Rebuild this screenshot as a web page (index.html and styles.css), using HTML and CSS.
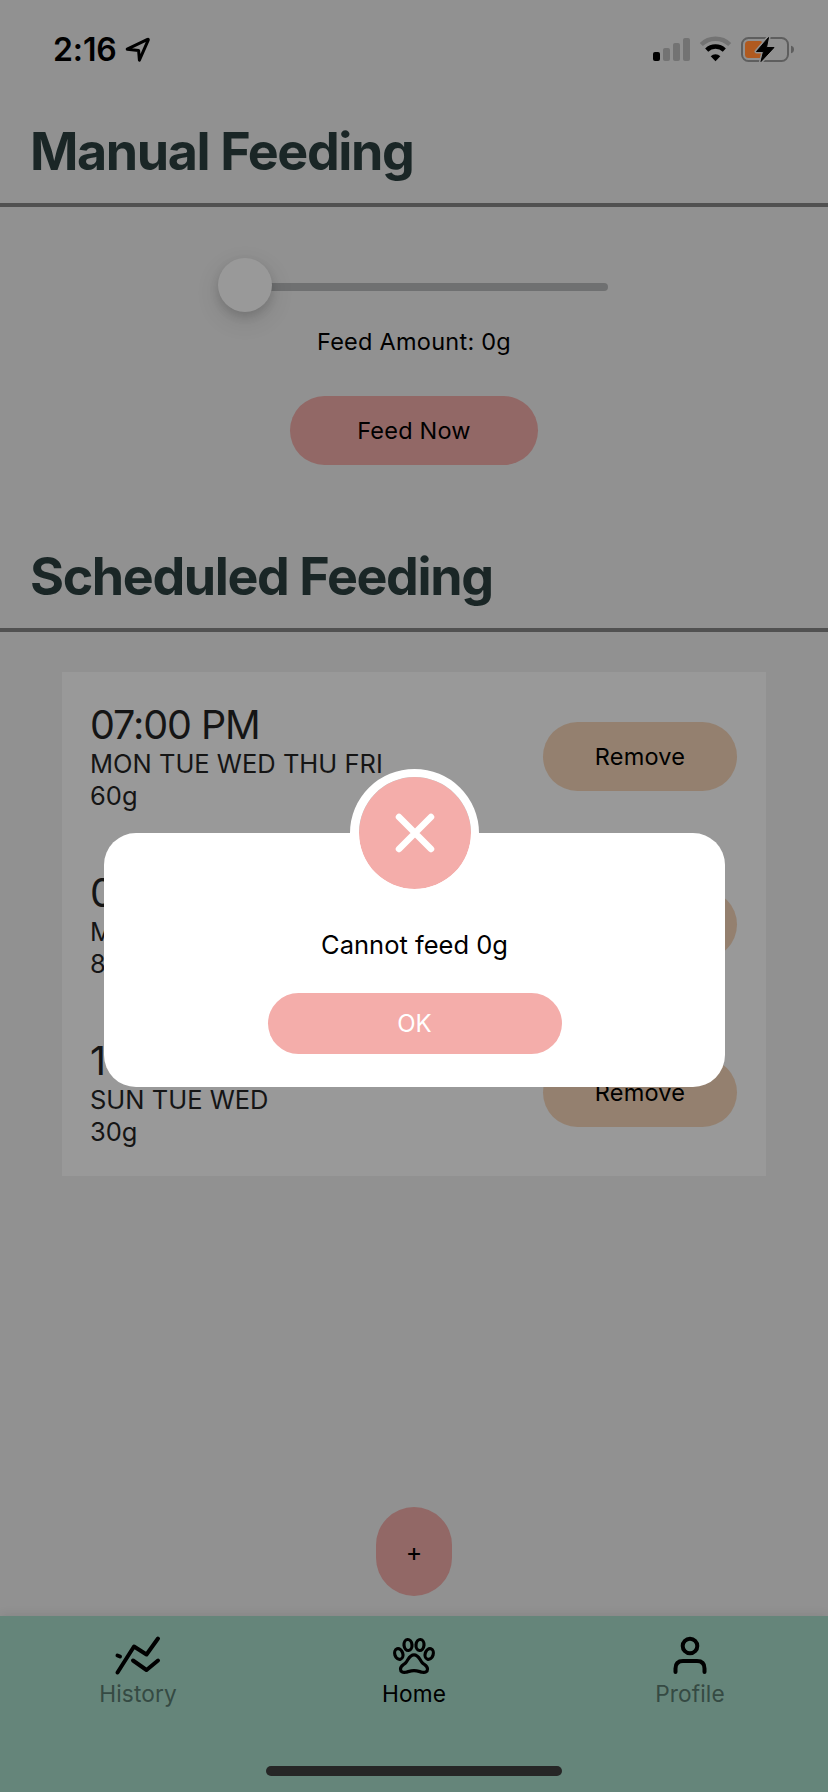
FILE: index.html
```html
<!DOCTYPE html>
<html lang="en">
<head>
<meta charset="utf-8">
<title>Feeder</title>
<link rel="stylesheet" href="styles.css">
</head>
<body>
<div class="screen">
  <header class="status">
    <div class="status-left">
      <span class="clock">2:16</span>
      <svg class="loc" width="26" height="26" viewBox="0 0 26 26"><path d="M2.2 12.2 L22.6 2.4 Q23.6 2 23.2 3.2 L14.4 23.2 L13.6 13.4 Z" fill="none" stroke="#000" stroke-width="3" stroke-linejoin="round"/></svg>
    </div>
    <svg class="status-icons" width="144" height="30" viewBox="0 0 144 30">
      <rect x="0" y="17" width="7" height="9" rx="2" fill="#000"/>
      <g fill="#737373"><rect x="10" y="13" width="7" height="13" rx="2"/><rect x="20" y="8" width="7" height="18" rx="2"/><rect x="30" y="3" width="7" height="23" rx="2"/></g>
      <path d="M48.3 9.5 A20.3 20.3 0 0 1 76.7 9.5" fill="none" stroke="#737373" stroke-width="4.4"/>
      <path d="M53.7 15.1 A12.6 12.6 0 0 1 71.3 15.1" fill="none" stroke="#000" stroke-width="4.4"/>
      <path d="M57.7 21.3 A6.8 6.8 0 0 1 67.3 21.3 L62.5 26.2 Z" fill="#000"/>
      <rect x="89" y="3" width="46" height="23" rx="6.5" fill="none" stroke="#5e5e5e" stroke-width="2"/>
      <path d="M138 10.8 Q141 11.5 141 14.5 Q141 17.500 138 18.200 Z" fill="#5e5e5e"/>
      <rect x="92" y="6" width="18" height="17" rx="3.500" fill="#b05a20"/>
      <path d="M115.500 2.500 L103.500 16.500 H110.500 L108 26.500 L121 12.500 H113.500 Z" fill="#000" stroke="#919191" stroke-width="4" stroke-linejoin="round"/>
      <path d="M115.500 2.500 L103.500 16.500 H110.500 L108 26.500 L121 12.500 H113.500 Z" fill="#000" stroke="#000" stroke-width="1" stroke-linejoin="round"/>
    </svg>
  </header>

  <h1 class="title">Manual Feeding</h1>
  <section class="manual">
    <div class="slider"><div class="knob"></div><div class="track"></div></div>
    <p class="amount">Feed Amount: 0g</p>
    <button class="btn feed">Feed Now</button>
  </section>

  <h1 class="title scheduled">Scheduled Feeding</h1>
  <section class="list">
    <div class="item">
      <div class="info"><div class="time">07:00 PM</div><div class="days">MON TUE WED THU FRI</div><div class="grams">60g</div></div>
      <button class="btn remove">Remove</button>
    </div>
    <div class="item">
      <div class="info"><div class="time">0</div><div class="days">M</div><div class="grams">8</div></div>
      <button class="btn remove"></button>
    </div>
    <div class="item">
      <div class="info"><div class="time">1</div><div class="days">SUN TUE WED</div><div class="grams">30g</div></div>
      <button class="btn remove">Remove</button>
    </div>
  </section>

  <button class="add">+</button>

  <nav class="tabs">
    <div class="tab history">
      <svg width="48" height="42" viewBox="0 0 48 42" fill="none" stroke="#000" stroke-width="4" stroke-linecap="round" stroke-linejoin="round"><path d="M3.500 37.500 L20 11.500 L32.500 19.500 L44 3.500"/><path d="M19 25.500 L32.500 35 L44 25.500"/><path d="M3.500 20.500 L6 21.500"/></svg>
      <span>History</span>
    </div>
    <div class="tab active home">
      <svg width="48" height="42" viewBox="0 0 48 42" fill="none" stroke="#000" stroke-width="3.200"><ellipse cx="18" cy="10" rx="4" ry="5.500" transform="rotate(-6 18 10)"/><ellipse cx="30" cy="10" rx="4" ry="5.500" transform="rotate(6 30 10)"/><ellipse cx="8.800" cy="19" rx="4" ry="5.500" transform="rotate(-18 8.800 19)"/><ellipse cx="39.200" cy="19" rx="4" ry="5.500" transform="rotate(18 39.200 19)"/><path d="M24 19.800 C19 19.800 18.500 25 15.500 28 C12.500 30.500 10.500 31 10.500 34 C10.500 37 13 37.800 15.500 37.300 C18.500 36.700 20.500 35.700 24 35.700 C27.500 35.700 29.500 36.700 32.500 37.300 C35 37.800 37.500 37 37.500 34 C37.500 31 35.500 30.500 32.500 28 C29.500 25 29 19.800 24 19.800 Z"/></svg>
      <span>Home</span>
    </div>
    <div class="tab profile">
      <svg width="48" height="42" viewBox="0 0 48 42" fill="none" stroke="#000" stroke-width="4" stroke-linecap="round"><circle cx="24" cy="11" r="7.300"/><path d="M9.500 37 V33.500 Q9.500 26 17 26 H31 Q38.500 26 38.500 33.500 V37"/></svg>
      <span>Profile</span>
    </div>
  </nav>
  <div class="indicator"></div>

  <div class="dialog">
    <div class="badge"><svg width="40" height="40" viewBox="0 0 40 40"><path d="M4 4 L36 36 M36 4 L4 36" stroke="#fff" stroke-width="6.500" stroke-linecap="round"/></svg></div>
    <p class="message">Cannot feed 0g</p>
    <button class="ok">OK</button>
  </div>
</div>
</body>
</html>
```

FILE: styles.css
```css
* { box-sizing: border-box; }
body { margin: 0; font-family: Inter, "Liberation Sans", sans-serif; color: #000; }
p, h1 { margin: 0; }
button { border: 0; padding: 0; font: inherit; color: inherit; white-space: nowrap; }
.screen { position: relative; width: 828px; height: 1792px; background: #919191; overflow: hidden; display: flex; flex-direction: column; white-space: nowrap; }
.status { height: 100px; flex: none; padding: 0 31px 0 53px; display: flex; justify-content: space-between; align-items: flex-start; }
.status-left { display: flex; align-items: flex-start; gap: 8px; padding-top: 30px; }
.clock { font-size: 32px; line-height: 40px; font-weight: 600; width: 64px; letter-spacing: -0.1px; }
.loc { margin-top: 7px; }
.status-icons { margin-top: 35px; }
.title { flex: none; height: 107px; padding: 20px 30px 0; border-bottom: 4px solid #515151; font-size: 52px; line-height: 64px; font-weight: 700; color: #1a2626; letter-spacing: -1.4px; }
.manual { height: 318px; flex: none; padding-top: 51px; display: flex; flex-direction: column; align-items: center; }
.slider { width: 390px; height: 54px; margin-right: 2px; display: flex; align-items: center; }
.knob { width: 54px; height: 54px; border-radius: 50%; background: #999; box-shadow: 0 8px 24px rgba(0,0,0,.12), 0 4px 10px rgba(0,0,0,.12); z-index: 1; }
.track { flex: 1; height: 8px; margin: 4px 0 0 -6px; border-radius: 4px; background: #6f7071; }
.amount { margin-top: 16px; font-size: 23.5px; line-height: 28px; letter-spacing: .25px; }
.btn { height: 69px; border-radius: 35px; font-size: 23.5px; letter-spacing: .2px; }
.feed { width: 248px; margin-top: 40px; background: #926866; }
.list { flex: none; width: 704px; height: 504px; margin: 40px 0 0 62px; background: #999; color: #151515; }
.item { height: 168px; padding: 31px 29px 0 28px; display: flex; justify-content: space-between; align-items: flex-start; }
.time { font-size: 39.5px; line-height: 45px; letter-spacing: -1.1px; }
.days, .grams { font-size: 25.5px; line-height: 32px; }
.remove { width: 194px; margin-top: 19px; background: #94806f; color: #000; }
.add { align-self: center; flex: none; width: 76px; height: 89px; margin-top: 331px; border-radius: 38px; background: #926866; font-size: 25px; }
.tabs { flex: none; height: 150px; margin-top: 20px; padding-top: 19px; background: #65857a; display: grid; grid-template-columns: repeat(3, 1fr); box-shadow: 0 -1px 10px rgba(0,0,0,.09); }
.tab { display: flex; flex-direction: column; align-items: center; font-size: 22.7px; line-height: 28px; letter-spacing: .1px; color: #354a43; }
.tab span { margin-top: 3px; }
.active { color: #000; }
.indicator { flex: none; height: 26px; background: #65857a; display: flex; justify-content: center; }
.indicator::before { content: ""; width: 296px; height: 10px; border-radius: 5px; background: #262626; }
.dialog { position: absolute; left: 104px; top: 833px; width: 621px; height: 254px; border-radius: 32px; background: #fff; display: flex; flex-direction: column; align-items: center; }
.badge { flex: none; width: 129px; height: 128px; margin-top: -64px; border: 8px solid #fff; border-width: 8px 8px 8px 9px; border-radius: 50%; background: #f4adaa; background-clip: padding-box; display: flex; align-items: center; justify-content: center; }
.message { margin-top: 33px; font-size: 25.5px; line-height: 30px; }
.ok { width: 294px; height: 61px; margin-top: 33px; border-radius: 31px; background: #f4adaa; color: #fff; font-size: 24px; }
```
